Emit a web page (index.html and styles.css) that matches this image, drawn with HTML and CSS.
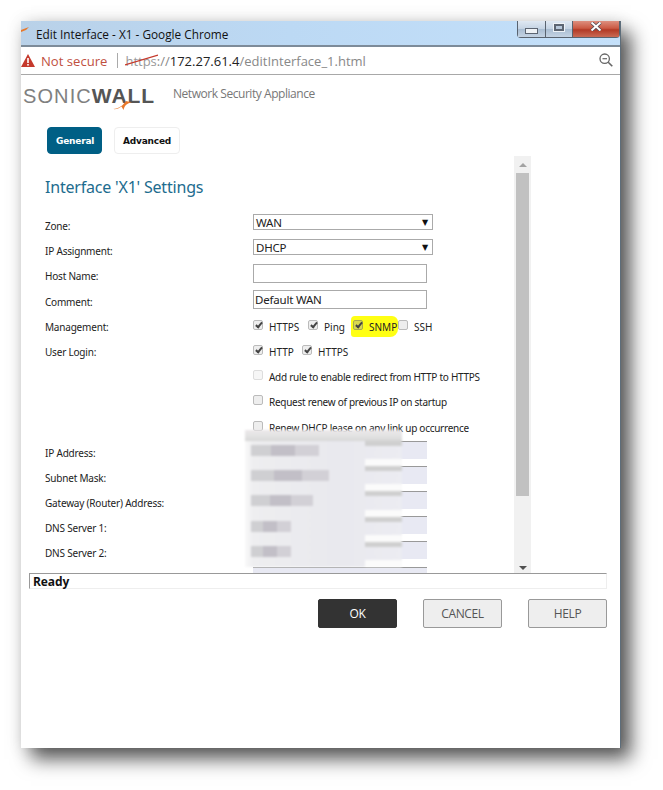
FILE: index.html
```html
<!DOCTYPE html>
<html lang="en">
<head>
    <meta charset="UTF-8">
    <meta name="viewport" content="width=device-width, initial-scale=1.0">
    <title>Edit Interface - X1</title>
    <link rel="stylesheet" href="styles.css">
</head>
<body>
    <div class="window">
        <div class="titlebar">
            <svg class="favicon" width="8" height="6" viewBox="0 0 8 6"><path d="M0 3 L8 0 L5 3 L0 5 Z" fill="#e8782a"/></svg>
            <span class="title">Edit Interface - X1 - Google Chrome</span>
            <div class="controls">
                <div class="ctl ctl-min"><span></span></div>
                <div class="ctl ctl-max"><span></span></div>
                <div class="ctl ctl-close">
                    <svg width="12" height="9" viewBox="0 0 12 9"><path d="M1.5 0.5 L10.5 8.5 M10.5 0.5 L1.5 8.5" stroke="#4a4a55" stroke-width="3.4"/><path d="M1.5 0.5 L10.5 8.5 M10.5 0.5 L1.5 8.5" stroke="#fff" stroke-width="2"/></svg>
                </div>
            </div>
        </div>

        <div class="addressbar">
            <svg class="warn" width="14" height="13" viewBox="0 0 14 13"><path d="M7 0 L14 13 L0 13 Z" fill="#c5392c"/><rect x="6.2" y="4" width="1.6" height="5" fill="#fff"/><rect x="6.2" y="10" width="1.6" height="1.6" fill="#fff"/></svg>
            <span class="not-secure">Not secure</span>
            <span class="sep"></span>
            <span class="url"><span class="scheme">https<svg class="strike" width="33" height="12" viewBox="0 0 33 12"><path d="M0 11 L33 1" stroke="#c5392c" stroke-width="1.3"/></svg></span><span class="grey">://</span>172.27.61.4<span class="grey">/editInterface_1.html</span></span>
            <svg class="zoom-icon" width="14" height="14" viewBox="0 0 14 14"><circle cx="5.7" cy="5.7" r="4.7" fill="none" stroke="#666" stroke-width="1.3"/><path d="M3.5 5.7 H8" stroke="#666" stroke-width="1.2"/><path d="M9.2 9.2 L13.3 13.3" stroke="#666" stroke-width="1.6"/></svg>
        </div>

        <div class="brand">
            <div class="logo">
                <span class="logo-thin">SONIC</span><span class="logo-bold">WALL</span>
                <svg class="swoosh" width="19" height="9" viewBox="0 0 19 9"><path d="M0 8 C6 7.5 10 4.5 13 0 L19 1.5 C14 2 11.5 4.5 10.5 9 L8.5 5.5 C6 7.5 3 8.5 0 8 Z" fill="#e8782a"/></svg>
            </div>
            <span class="product">Network Security Appliance</span>
        </div>

        <div class="tabs">
            <div class="tab active">General</div>
            <div class="tab">Advanced</div>
        </div>

        <div class="panel">
            <div class="form">
                <h1>Interface 'X1' Settings</h1>
                <div class="rows">
                    <label>Zone:</label>
                    <div class="field"><div class="select">WAN<span class="arrow">▼</span></div></div>

                    <label>IP Assignment:</label>
                    <div class="field"><div class="select">DHCP<span class="arrow">▼</span></div></div>

                    <label>Host Name:</label>
                    <div class="field"><div class="text"></div></div>

                    <label>Comment:</label>
                    <div class="field"><div class="text">Default WAN</div></div>

                    <label>Management:</label>
                    <div class="field checks">
                        <span class="check on"></span><span class="w-https">HTTPS</span>
                        <span class="check on"></span><span class="w-ping">Ping</span>
                        <span class="snmp"><span class="check on"></span><span>SNMP</span></span>
                        <span class="check"></span><span>SSH</span>
                    </div>

                    <label>User Login:</label>
                    <div class="field checks">
                        <span class="check on"></span><span class="w-http">HTTP</span>
                        <span class="check on"></span><span>HTTPS</span>
                    </div>

                    <label></label>
                    <div class="field checks"><span class="check off"></span><span class="long">Add rule to enable redirect from HTTP to HTTPS</span></div>

                    <label></label>
                    <div class="field checks"><span class="check"></span><span class="long">Request renew of previous IP on startup</span></div>

                    <label></label>
                    <div class="field checks"><span class="check"></span><span class="long">Renew DHCP lease on any link up occurrence</span></div>

                    <label>IP Address:</label>
                    <div class="field"><div class="text masked"></div></div>

                    <label>Subnet Mask:</label>
                    <div class="field"><div class="text masked"></div></div>

                    <label>Gateway (Router) Address:</label>
                    <div class="field"><div class="text masked"></div></div>

                    <label>DNS Server 1:</label>
                    <div class="field"><div class="text masked"></div></div>

                    <label>DNS Server 2:</label>
                    <div class="field"><div class="text masked"></div></div>

                    <label></label>
                    <div class="field"><div class="text masked"></div></div>
                </div>

                <!-- the blurred out addresses -->
                <div class="smudge">
                    <div class="smudge-top"></div>
                    <div class="smudge-row"><span class="blot b1"></span></div>
                    <div class="smudge-row"><span class="blot b2"></span></div>
                    <div class="smudge-row"><span class="blot b3"></span></div>
                    <div class="smudge-row"><span class="blot b4"></span></div>
                    <div class="smudge-row"><span class="blot b4"></span></div>
                </div>
            </div>

            <div class="scrollbar">
                <span class="sb-up"></span>
                <div class="track"><div class="thumb"></div></div>
                <span class="sb-down"></span>
            </div>
        </div>

        <div class="status">Ready</div>

        <div class="buttons">
            <div class="btn primary">OK</div>
            <div class="btn">CANCEL</div>
            <div class="btn">HELP</div>
        </div>
    </div>
</body>
</html>
```

FILE: styles.css
```css
body { margin: 0; padding: 21px 0 0 21px; background: #fff; font-family: "Noto Sans", sans-serif; font-size: 10px; color: #222; height: 790px; overflow: hidden; box-sizing: border-box; }

.window { width: 600px; height: 727px; background: #fff; box-shadow: 10px 11px 18px rgba(0,0,0,.65), 0 0 16px rgba(0,0,0,.1); border-right: 1px solid #5d6d7a; box-sizing: border-box; }

.titlebar { position: relative; height: 26px; display: flex; align-items: center; background: linear-gradient(90deg, #b9d1e8 0, #bcd9f4 45%, #c4e0fa 100%); border-bottom: 2px solid #7d8b99; box-sizing: border-box; padding-top: 2px; }
.favicon { position: absolute; left: 0; top: 6px; }
.title { margin-left: 15px; font-family: "Open Sans", sans-serif; font-size: 11.8px; color: #111; }
.controls { position: absolute; right: 0; top: 0; display: flex; height: 16px; border: 1px solid #59636f; border-top: none; border-radius: 0 0 4px 4px; }
.ctl { display: flex; align-items: center; justify-content: center; border-right: 1px solid #59636f; background: linear-gradient(#dfe8f2 0, #c4d3e3 50%, #a9bdd2 52%, #c4d3e3 100%); }
.ctl-min { width: 27px; }
.ctl-min span { width: 11px; height: 4px; background: #eef2f6; border: 1px solid #5c6572; margin-top: 3px; }
.ctl-max { width: 26px; }
.ctl-max span { width: 6px; height: 3px; background: #b8c8da; border: 2px solid #5c6572; box-shadow: 0 0 0 1px #eef2f6; margin-top: -4px; }
.ctl-close { width: 46px; border-right: none; background: linear-gradient(#dd8f7f 0, #cb5a44 45%, #b23a26 55%, #c96a55 100%); align-items: flex-start; }
.ctl-close svg { margin-top: 1px; }

.addressbar { position: relative; height: 28px; display: flex; align-items: center; border-bottom: 1px solid #a8a8a8; box-sizing: border-box; font-family: "Open Sans", sans-serif; font-size: 13px; }
.not-secure { margin-left: 6px; color: #c0503f; font-size: 13.1px; }
.sep { width: 1px; height: 15px; background: #aaa; margin: 0 7px 0 10px; }
.url { color: #222; font-size: 13px; white-space: nowrap; }
.grey { color: #888; }
.scheme { position: relative; color: #999; }
.strike { position: absolute; left: 0; top: 2px; }
.zoom-icon { position: absolute; right: 7px; top: 6px; }

.brand { height: 52px; display: flex; align-items: flex-start; padding-top: 10px; box-sizing: border-box; }
.logo { position: relative; display: flex; margin-left: 2px; width: 150px; font-family: "Liberation Sans", sans-serif; font-size: 20px; line-height: 22px; }
.logo-thin { font-weight: 400; letter-spacing: 1.1px; color: #808080; }
.logo-bold { font-weight: 700; font-size: 21px; color: #555; letter-spacing: .9px; }
.swoosh { position: absolute; left: 90px; top: 16px; }
.product { margin-top: 0; font-size: 12px; font-family: "Open Sans", sans-serif; letter-spacing: -.45px; color: #777; }

.tabs { height: 29px; display: flex; gap: 12px; padding-left: 26px; box-sizing: border-box; }
.tab { height: 27px; padding: 0 8px; display: flex; align-items: center; border: 1px solid #eee; border-radius: 4px; font-family: "DejaVu Sans", sans-serif; font-weight: 700; font-size: 9px; letter-spacing: -.2px; color: #111; box-sizing: border-box; }
.tab.active { width: 55px; background: #005f85; border-color: #005f85; color: #fff; }

.panel { height: 417px; display: flex; overflow: hidden; }
.form { position: relative; width: 493px; padding-left: 24px; box-sizing: border-box; }
h1 { height: 58px; margin: 0; padding-top: 20px; box-sizing: border-box; font-size: 16px; font-weight: 400; line-height: 22px; color: #1d6c8e; letter-spacing: -.2px; }

.rows { display: grid; grid-template-columns: 208px 1fr; grid-auto-rows: 25.2px; }
.rows label { padding-top: 6px; line-height: 13px; color: #222; white-space: nowrap; letter-spacing: -.2px; }
.field { font-size: 10px; }
.select { position: relative; width: 180px; height: 16px; border: 1px solid #aaa; box-sizing: border-box; padding-left: 2px; font-size: 11.5px; letter-spacing: -.2px; line-height: 15px; color: #222; }
.arrow { position: absolute; right: 4px; top: 0; font-size: 8px; color: #111; font-family: "DejaVu Sans", sans-serif; }
.text { width: 174px; height: 19px; border: 1px solid #aaa; box-sizing: border-box; padding-left: 1px; font-size: 11.5px; letter-spacing: -.2px; line-height: 17px; color: #222; }
.text.masked { height: 18px; background: #e8e9f3; border: none; border-top: 1.5px solid #999; }

.checks { display: flex; align-items: flex-start; height: 14px; margin-top: 4px; line-height: 16px; white-space: nowrap; }
.check { flex: none; position: relative; width: 10px; height: 10px; margin-right: 6px; margin-top: 1px; background: #eee; border: 1px solid #bbb; border-radius: 2px; box-sizing: border-box; }
.check.on::after { content: ""; position: absolute; left: 3px; top: 0; width: 2px; height: 5px; border: solid #444; border-width: 0 2px 2px 0; transform: rotate(40deg); }
.check.off { background: #f6f6f6; border-color: #ddd; }
.long { letter-spacing: -.27px; }
.w-https { width: 39px; }
.w-ping { width: 27px; }
.w-http { width: 33px; }
.snmp { flex: none; display: flex; align-items: flex-start; height: 21px; width: 47px; margin: -3px 0 -6px 0; padding: 3px 0 0 2px; box-sizing: border-box; background: #ffff14; border-radius: 4px 6px 8px 3px; }
.snmp .check { background: #d8d850; border-color: #a8a850; }

.smudge { position: absolute; left: 224px; top: 274px; width: 157px; display: flex; flex-direction: column; filter: blur(.8px); }
.smudge-top { height: 11px; background: linear-gradient(#ece8ea 0, #e2e2e2 60%, #d6d6d6 100%); }
.smudge-row { height: 25.2px; box-sizing: border-box; padding: 4px 0 0 6px; background: linear-gradient(#fbfbfb, #fbfbfb) right bottom / 37px 7px no-repeat, linear-gradient(#cfcfcf, #cfcfcf) right top / 37px 5px no-repeat, linear-gradient(90deg, #f9f9f9 0, #eeeef0 8px, #e9e9ee 60%, #ececf2 100%); }
.blot { display: block; height: 11px; background: linear-gradient(90deg, #cfcfd2 0 30%, #c2bfc7 30% 65%, #d2d0d6 65% 100%); }
.b1 { width: 68px; }
.b2 { width: 78px; }
.b3 { width: 62px; }
.b4 { width: 40px; }

.scrollbar { width: 17px; height: 417px; background: #f1f1f1; display: flex; flex-direction: column; align-items: center; }
.track { flex: 1; width: 13px; }
.thumb { width: 13px; height: 323px; background: #c1c1c1; }
.sb-up, .sb-down { flex: none; width: 0; height: 0; border: 4px solid transparent; }
.sb-up { border-top: none; border-bottom: 4px solid #a3a3a3; margin: 7px 0 6px; }
.sb-down { border-bottom: none; border-top: 4px solid #505050; margin: 70px 0 6px; }

.status { margin: 0 13px 0 8px; height: 16px; border: 1px solid #eee; border-top-color: #999; border-left-color: #999; box-sizing: border-box; padding-left: 3px; font-family: "Open Sans", sans-serif; font-weight: 700; font-size: 12px; letter-spacing: -.1px; line-height: 15px; color: #111; }

.buttons { display: flex; justify-content: flex-end; gap: 26px; margin: 10px 13px 0 0; }
.btn { width: 79px; height: 29px; display: flex; align-items: center; justify-content: center; background: #eee; border: 1px solid #999; border-radius: 2px; box-sizing: border-box; font-family: "Open Sans", sans-serif; font-size: 12px; letter-spacing: -.4px; color: #555; }
.btn.primary { background: #333; border-color: #333; color: #fff; }
```
